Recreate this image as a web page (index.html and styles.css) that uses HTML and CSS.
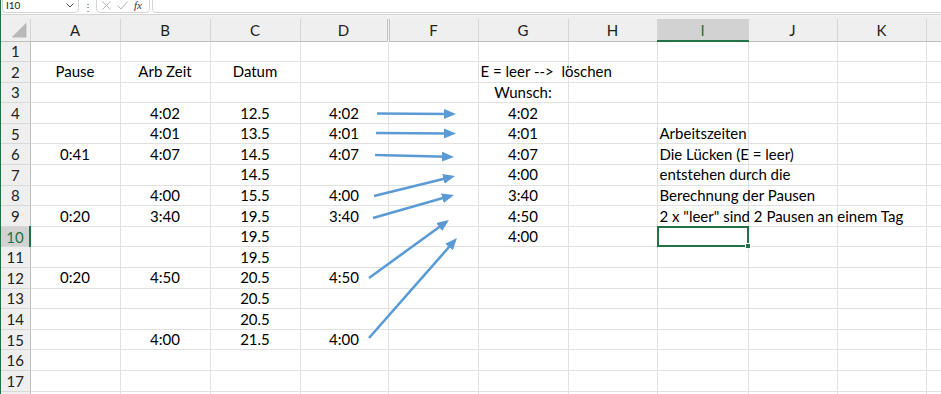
FILE: index.html
```html
<!DOCTYPE html>
<html lang="de">
<head>
  <meta charset="UTF-8">
  <title>Arbeitszeiten</title>
  <link rel="stylesheet" href="styles.css">
</head>
<body>
  <div class="app">
    <!-- formula bar -->
    <div class="formula-bar">
      <div class="name-box">
        <span>I10</span>
        <svg class="chevron" width="8" height="5" viewBox="0 0 8 5"><path d="M0.5 0.5 L4 4 L7.5 0.5" fill="none" stroke="#555" stroke-width="1"/></svg>
      </div>
      <div class="dots">&#8942;</div>
      <div class="fx-box">
        <svg width="9" height="9" viewBox="0 0 9 9"><path d="M0.5 0.5 L8.5 8.5 M8.5 0.5 L0.5 8.5" stroke="#b5b5b5" stroke-width="1"/></svg>
        <svg width="11" height="9" viewBox="0 0 11 9"><path d="M0.5 4.5 L4 8 L10.5 0.5" fill="none" stroke="#b5b5b5" stroke-width="1"/></svg>
        <span class="fx">fx</span>
      </div>
      <div class="formula-input"></div>
    </div>
    <div class="head-gap"></div>

    <table class="sheet">
      <colgroup>
        <col class="c-row"><col class="c-90"><col class="c-90"><col class="c-90"><col class="c-88"><col class="c-90"><col class="c-90"><col class="c-89"><col class="c-91"><col class="c-89"><col class="c-89"><col class="c-rest">
      </colgroup>
      <thead>
        <tr>
          <th class="corner"></th><th>A</th><th>B</th><th>C</th><th class="hidden-after">D</th><th>F</th><th>G</th><th>H</th><th class="active">I</th><th>J</th><th>K</th><th></th>
        </tr>
      </thead>
      <tbody>
        <tr><th>1</th><td></td><td></td><td></td><td></td><td></td><td></td><td></td><td></td><td></td><td></td><td></td></tr>
        <tr><th>2</th><td>Pause</td><td>Arb Zeit</td><td>Datum</td><td></td><td></td><td class="left">E = leer --&gt;&nbsp; löschen</td><td></td><td></td><td></td><td></td><td></td></tr>
        <tr><th>3</th><td></td><td></td><td></td><td></td><td></td><td>Wunsch:</td><td></td><td></td><td></td><td></td><td></td></tr>
        <tr><th>4</th><td></td><td>4:02</td><td>12.5</td><td>4:02</td><td></td><td>4:02</td><td></td><td></td><td></td><td></td><td></td></tr>
        <tr><th>5</th><td></td><td>4:01</td><td>13.5</td><td>4:01</td><td></td><td>4:01</td><td></td><td class="left">Arbeitszeiten</td><td></td><td></td><td></td></tr>
        <tr><th>6</th><td>0:41</td><td>4:07</td><td>14.5</td><td>4:07</td><td></td><td>4:07</td><td></td><td class="left">Die Lücken (E = leer)</td><td></td><td></td><td></td></tr>
        <tr><th>7</th><td></td><td></td><td>14.5</td><td></td><td></td><td>4:00</td><td></td><td class="left">entstehen durch die</td><td></td><td></td><td></td></tr>
        <tr><th>8</th><td></td><td>4:00</td><td>15.5</td><td>4:00</td><td></td><td>3:40</td><td></td><td class="left">Berechnung der Pausen</td><td></td><td></td><td></td></tr>
        <tr><th>9</th><td>0:20</td><td>3:40</td><td>19.5</td><td>3:40</td><td></td><td>4:50</td><td></td><td class="left">2 x "leer" sind 2 Pausen an einem Tag</td><td></td><td></td><td></td></tr>
        <tr><th class="active">10</th><td></td><td></td><td>19.5</td><td></td><td></td><td>4:00</td><td></td><td class="selected"></td><td></td><td></td><td></td></tr>
        <tr><th>11</th><td></td><td></td><td>19.5</td><td></td><td></td><td></td><td></td><td></td><td></td><td></td><td></td></tr>
        <tr><th>12</th><td>0:20</td><td>4:50</td><td>20.5</td><td>4:50</td><td></td><td></td><td></td><td></td><td></td><td></td><td></td></tr>
        <tr><th>13</th><td></td><td></td><td>20.5</td><td></td><td></td><td></td><td></td><td></td><td></td><td></td><td></td></tr>
        <tr><th>14</th><td></td><td></td><td>20.5</td><td></td><td></td><td></td><td></td><td></td><td></td><td></td><td></td></tr>
        <tr><th>15</th><td></td><td>4:00</td><td>21.5</td><td>4:00</td><td></td><td></td><td></td><td></td><td></td><td></td><td></td></tr>
        <tr><th>16</th><td></td><td></td><td></td><td></td><td></td><td></td><td></td><td></td><td></td><td></td><td></td></tr>
        <tr><th>17</th><td></td><td></td><td></td><td></td><td></td><td></td><td></td><td></td><td></td><td></td><td></td></tr>
        <tr><th></th><td></td><td></td><td></td><td></td><td></td><td></td><td></td><td></td><td></td><td></td><td></td></tr>
      </tbody>
    </table>

    <!-- arrows drawn on top of the sheet -->
    <svg class="arrows" width="941" height="394" viewBox="0 0 941 394">
      <defs>
        <marker id="head" markerUnits="userSpaceOnUse" markerWidth="13" markerHeight="11" refX="6" refY="5" orient="auto">
          <path d="M0,0 L12,5 L0,10 z" fill="#5b9bd5"/>
        </marker>
      </defs>
      <g stroke="#5b9bd5" stroke-width="2.6" fill="none" marker-end="url(#head)">
        <line x1="377" y1="113.5" x2="450" y2="114"/>
        <line x1="376" y1="133" x2="450" y2="133.5"/>
        <line x1="375" y1="155" x2="448" y2="156.8"/>
        <line x1="374" y1="196" x2="449.2" y2="177.4"/>
        <line x1="373" y1="218" x2="448.2" y2="196.6"/>
        <line x1="369" y1="278" x2="444.1" y2="223.5"/>
        <line x1="369" y1="338" x2="453" y2="242.5"/>
      </g>
    </svg>
  </div>
</body>
</html>
```

FILE: styles.css
```css
/* Page */
body {
  margin: 0;
  font-family: 'Lato', 'Open Sans', sans-serif;
  background: #fff;
  color: #000;
  overflow: hidden;
}

.app {
  position: relative;
  height: 394px;
  border-left: 1px solid #217346;
  overflow: hidden;
}

/* Formula bar */
.formula-bar {
  display: flex;
  align-items: flex-end;
  height: 14px;
  overflow: hidden;
  background: #fff;
  border-bottom: 1px solid #d6d6d6;
}

.name-box,
.fx-box,
.formula-input {
  height: 20px;
  margin-bottom: 1px;
  border: 1px solid #d4d4d4;
  border-radius: 4px;
  background: #fff;
  box-sizing: border-box;
  display: flex;
  align-items: flex-end;
  padding-bottom: 2px;
}

.name-box {
  width: 77px;
  margin-left: 1px;
  padding-left: 3px;
  padding-right: 4px;
  justify-content: space-between;
  font-size: 10px;
  color: #222;
}

.name-box span {
  line-height: 10px;
}

.chevron {
  margin-bottom: 2px;
}

.dots {
  width: 17px;
  text-align: center;
  font-size: 10px;
  line-height: 1;
  color: #555;
  margin-bottom: 2px;
}

.fx-box {
  width: 54px;
  gap: 6px;
  padding-left: 5px;
  padding-bottom: 2px;
}

.fx {
  font-family: 'Liberation Serif', serif;
  font-style: italic;
  font-size: 11px;
  line-height: 10px;
  color: #333;
}

.formula-input {
  flex: 1;
  margin-left: 2px;
  margin-right: -4px;
}

.head-gap {
  height: 4px;
  background: #f0f0f0;
}

/* Sheet grid */
.sheet {
  border-collapse: collapse;
  table-layout: fixed;
  width: 940px;
}

.c-row { width: 29px; }
.c-88 { width: 88px; }
.c-89 { width: 89px; }
.c-90 { width: 90px; }
.c-91 { width: 91px; }
.c-rest { width: 15px; }

.sheet th {
  background: #efefef;
  font-weight: normal;
  font-size: 15px;
  color: #222;
  padding: 0;
  text-align: center;
}

.sheet thead th {
  height: 21px;
  border-right: 1px solid #d4d4d4;
  border-bottom: 1px solid #bdbdbd;
}

.sheet thead th.hidden-after {
  border-right: 3px double #c4c4c4;
}

.sheet thead th.active {
  background: #d2d2d2;
  color: #217346;
  border-bottom: 2px solid #217346;
}

.sheet th.corner {
  position: relative;
}

.sheet th.corner::after {
  content: '';
  position: absolute;
  right: 3px;
  bottom: 3px;
  width: 15px;
  height: 15px;
  background: #b8b8b8;
  clip-path: polygon(100% 0, 100% 100%, 0 100%);
}

.sheet tbody tr {
  height: 20.6px;
}

.sheet tbody th {
  border-right: 1px solid #bdbdbd;
  border-bottom: 1px solid #d8d8d8;
}

.sheet tbody th.active {
  background: #d2d2d2;
  color: #217346;
  border-right: 2px solid #217346;
}

.sheet td {
  border-right: 1px solid #e1e1e1;
  border-bottom: 1px solid #e1e1e1;
  padding: 0 2px;
  font-size: 15px;
  line-height: 1;
  text-align: center;
  vertical-align: middle;
  white-space: nowrap;
  overflow: visible;
}

.sheet td.left {
  text-align: left;
}

/* active cell I10 */
.sheet td.selected {
  position: relative;
}

.sheet td.selected::before {
  content: '';
  position: absolute;
  left: -1px;
  top: -1px;
  right: -1px;
  bottom: -1px;
  border: 2px solid #217346;
}

.sheet td.selected::after {
  content: '';
  position: absolute;
  right: -3px;
  bottom: -3px;
  width: 4px;
  height: 4px;
  background: #217346;
  border: 1px solid #fff;
}

/* Arrows */
.arrows {
  position: absolute;
  left: -1px;
  top: 0;
  pointer-events: none;
}
```
